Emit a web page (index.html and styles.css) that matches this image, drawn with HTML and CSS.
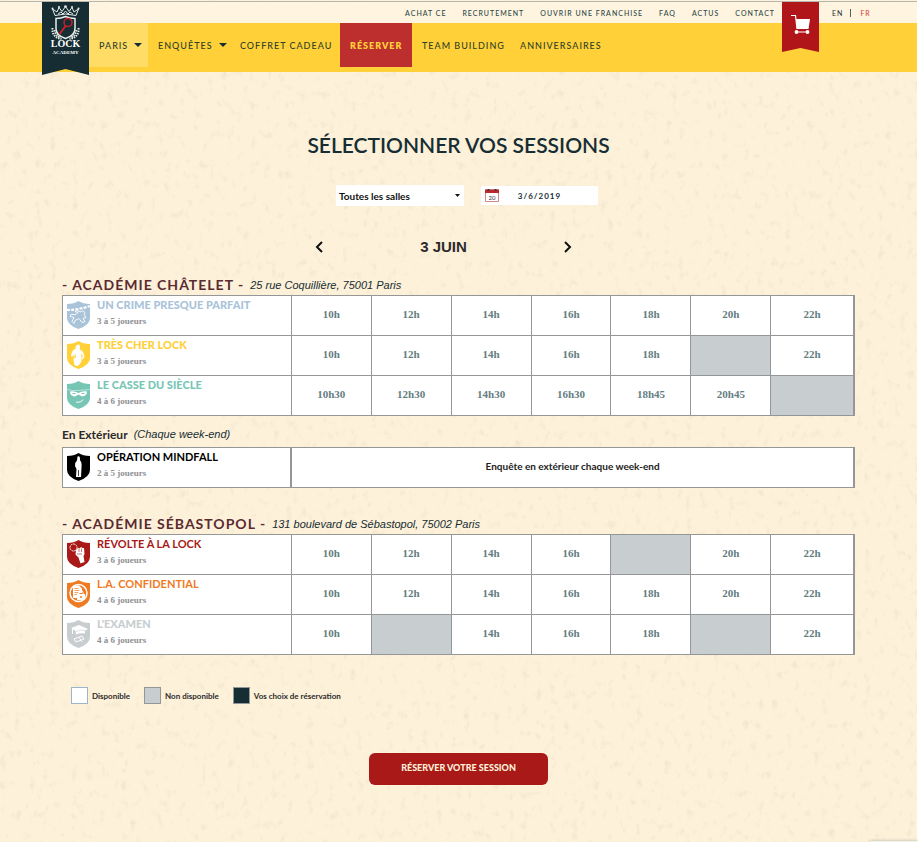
FILE: index.html
```html
<!DOCTYPE html>
<html lang="fr">
<head>
<meta charset="utf-8">
<title>Lock Academy – Réserver</title>
<meta name="viewport" content="width=device-width, initial-scale=1">
<link rel="stylesheet" href="styles.css">
</head>
<body>
<svg class="paper" aria-hidden="true">
  <filter id="grain" x="0" y="0" width="100%" height="100%">
    <feTurbulence type="fractalNoise" baseFrequency="0.14 0.1" numOctaves="4" seed="8"/>
    <feColorMatrix values="0 0 0 0 0.6  0 0 0 0 0.5  0 0 0 0 0.35  1.6 0 0 0 -0.93"/>
  </filter>
  <rect width="100%" height="100%" filter="url(#grain)"/>
</svg>
<header class="header">
  <a class="logo" href="#" aria-label="Lock Academy">
    <svg width="47" height="73" viewBox="0 0 47 73">
      <path d="M0 0h47v73L23.500 67 0 73z" fill="#152d33"/>
      <g fill="none" stroke="#e9eeec" stroke-width="1">
        <path d="M13 13.500 10.500 7l4.500 3 2-4.500 3 4L23.500 4.500 27 9.500l3-4L32 10l4.500-3L34 13.500q-10.500-3-21 0z"/>
        <path d="M14 16.500q5 0 9.500-2 4.500 2 9.500 2v10q0 7-9.500 10-9.500-3-9.500-10z" stroke-width="1.500"/>
        <path d="M16 12l3-2 2 2 2.500-3 2.500 3 2-2 3 2"/>
      </g>
      <g fill="none" stroke="#e9eeec" stroke-width="2" stroke-dasharray="1.500 1">
        <path d="M10.500 26q-1 9 9 11M36.500 26q1 9-9 11"/>
        <path d="M12.500 28q1 5 6 8M34.500 28q-1 5-6 8"/>
      </g>
      <g fill="#e9eeec"><circle cx="10.500" cy="6.500" r="1"/><circle cx="17" cy="5" r="1"/><circle cx="23.500" cy="4.500" r="1.300"/><circle cx="30" cy="5" r="1"/><circle cx="36.500" cy="6.500" r="1"/></g>
      <circle cx="26" cy="20.500" r="4" fill="none" stroke="#c8202a" stroke-width="1.500"/>
      <path d="M23.500 24 18 31.500" stroke="#c8202a" stroke-width="2" stroke-linecap="round"/>
      <text class="logo-big" x="23.500" y="45" text-anchor="middle">LOCK</text>
      <text class="logo-small" x="23.500" y="52" text-anchor="middle">ACADEMY</text>
    </svg>
  </a>
  <nav class="top-links" aria-label="Liens">
    <a href="#">ACHAT CE</a><a href="#">RECRUTEMENT</a><a href="#">OUVRIR UNE FRANCHISE</a><a href="#">FAQ</a><a href="#">ACTUS</a><a href="#">CONTACT</a>
  </nav>
  <nav class="menu" aria-label="Menu principal">
    <a class="city" href="#">PARIS <i class="caret"></i></a>
    <a href="#">ENQUÊTES <i class="caret"></i></a>
    <a href="#">COFFRET CADEAU</a>
    <a class="current" href="#">RÉSERVER</a>
    <a href="#">TEAM BUILDING</a>
    <a href="#">ANNIVERSAIRES</a>
  </nav>
  <a class="cart" href="#" aria-label="Panier">
    <svg width="37" height="50" viewBox="0 0 37 50">
      <path d="M0 0h37v50L18.500 46 0 50z" fill="#b0151a"/>
      <g fill="none" stroke="#fff" stroke-width="1.200"><path d="M9 13.500h4.500l1.500 13.500M14 30h12"/></g>
      <path d="M14 17h14l-1.500 10H15z" fill="#fff"/>
      <circle cx="14.500" cy="30" r="1.900" fill="#fff"/><circle cx="25.500" cy="30" r="1.900" fill="#fff"/>
    </svg>
  </a>
  <nav class="langs" aria-label="Langue"><a href="#">EN</a><a class="active" href="#">FR</a></nav>
</header>

<main class="page">
  <h1>SÉLECTIONNER VOS SESSIONS</h1>
  <form class="filters">
    <div class="room">
      <select aria-label="Salle"><option>Toutes les salles</option></select>
      <svg width="5" height="3" viewBox="0 0 5 3"><path d="M0 0h5L2.500 3z" fill="#111"/></svg>
    </div>
    <div class="date">
      <svg width="14" height="13" viewBox="0 0 14 13">
        <path d="M.5 1h13v11.500H.5z" fill="#fff" stroke="#cf8a8a"/><path d="M0 .5h14V4H0z" fill="#b8282c"/>
        <path d="M2.500 0h2v1.500h-2zM9.500 0h2v1.500h-2z" fill="#333"/>
        <text class="cal-day" x="7" y="10.500" text-anchor="middle">20</text>
      </svg>
      <input type="text" value="3/6/2019" aria-label="Date">
    </div>
  </form>
  <div class="day">
    <button type="button" aria-label="Jour précédent"><svg width="8" height="12" viewBox="0 0 8 12"><path d="M7 1 2 6l5 5"/></svg></button>
    <strong>3 JUIN</strong>
    <button type="button" aria-label="Jour suivant"><svg width="8" height="12" viewBox="0 0 8 12"><path d="m1 1 5 5-5 5"/></svg></button>
  </div>

  <section class="venue">
    <div class="venue-head"><h2>- ACADÉMIE CHÂTELET -</h2><em>25 rue Coquillière, 75001 Paris</em></div>
    <table>
      <colgroup><col class="col-game"><col class="col-slot" span="6"><col></colgroup>
      <tr>
        <th class="blue"><div class="game">
          <svg width="23" height="28" viewBox="0 0 23 28"><path d="M0 3Q7 3 11.500 0 16 3 23 3v14q0 7-11.500 11Q0 24 0 17z" fill="currentColor"/><path d="M0 9q11 0 23-4" fill="none" stroke="#fff" stroke-width="2.200" stroke-dasharray="3 1.200"/><path d="M14 11a2 2 0 1 1 3 2.500l2 3-3 1 2 3-3 1-3-4-4 2-1 3-2-2 2-4-4-1 1-2 5 0 2-2-3-1 2-1z" fill="none" stroke="#fff" stroke-width=".9"/></svg>
          <div><b class="heavy">UN CRIME PRESQUE PARFAIT</b><small>3 à 5 joueurs</small></div></div></th>
        <td><button>10h</button></td><td><button>12h</button></td><td><button>14h</button></td><td><button>16h</button></td><td><button>18h</button></td><td><button>20h</button></td><td><button>22h</button></td>
      </tr>
      <tr>
        <th class="yellow"><div class="game">
          <svg width="23" height="28" viewBox="0 0 23 28"><path d="M0 3Q7 3 11.500 0 16 3 23 3v14q0 7-11.500 11Q0 24 0 17z" fill="currentColor"/><path d="M10 4q3-1.500 3 2l-.5 2.500q4 .5 5 7.500l-2.500 3-1-4 .5 5q-2 5-5 5l-2-1-1-5 .5-5-2 2-1-1q1-7 5-7.500l-.5-2z" fill="#fff"/><path d="M8 12l1 4-2 2zM15 12l-1 3 2 2z" fill="currentColor"/></svg>
          <div><b class="heavy">TRÈS CHER LOCK</b><small>3 à 5 joueurs</small></div></div></th>
        <td><button>10h</button></td><td><button>12h</button></td><td><button>14h</button></td><td><button>16h</button></td><td><button>18h</button></td><td class="off"></td><td><button>22h</button></td>
      </tr>
      <tr>
        <th class="green"><div class="game">
          <svg width="23" height="28" viewBox="0 0 23 28"><path d="M0 3Q7 3 11.500 0 16 3 23 3v14q0 7-11.500 11Q0 24 0 17z" fill="currentColor"/><path d="M0 8.500q6 1.500 11.500 1T23 8.500" fill="none" stroke="#fff" stroke-width=".8" opacity=".6"/><path d="M3 10.500q4-1 8.500 1.500Q16 9.500 20 10.500q0 4.500-5 5l-3.500-2-3.500 2q-5-.5-5-5z" fill="#fff"/><path d="M5.500 12.500h3M14.500 12.500h3" stroke="currentColor" stroke-width="1.200"/><path d="M9 21q5 1 7-2.500" fill="none" stroke="#fff"/></svg>
          <div><b class="heavy">LE CASSE DU SIÈCLE</b><small>4 à 6 joueurs</small></div></div></th>
        <td><button>10h30</button></td><td><button>12h30</button></td><td><button>14h30</button></td><td><button>16h30</button></td><td><button>18h45</button></td><td><button>20h45</button></td><td class="off"></td>
      </tr>
    </table>
  </section>

  <section class="venue outdoor">
    <div class="venue-head"><h3>En Extérieur</h3><em>(Chaque week-end)</em></div>
    <table>
      <colgroup><col class="col-game"><col></colgroup>
      <tr>
        <th class="black"><div class="game">
          <svg width="23" height="28" viewBox="0 0 23 28"><path d="M0 3Q7 3 11.500 0 16 3 23 3v14q0 7-11.500 11Q0 24 0 17z" fill="currentColor"/><path d="M10.500 3.500q2.500-1 2.500 2v2q2 1 1.500 7l-.5 9.500h-5l.5-8-1.500-3q0-4 2-5.500z" fill="#fff"/><path d="M11.500 17v6" stroke="currentColor" stroke-width=".7"/></svg>
          <div><b>OPÉRATION MINDFALL</b><small>2 à 5 joueurs</small></div></div></th>
        <td class="note">Enquête en extérieur chaque week-end</td>
      </tr>
    </table>
  </section>

  <section class="venue second">
    <div class="venue-head"><h2>- ACADÉMIE SÉBASTOPOL -</h2><em>131 boulevard de Sébastopol, 75002 Paris</em></div>
    <table>
      <colgroup><col class="col-game"><col class="col-slot" span="6"><col></colgroup>
      <tr>
        <th class="red"><div class="game">
          <svg width="23" height="28" viewBox="0 0 23 28"><path d="M0 3Q7 3 11.500 0 16 3 23 3v14q0 7-11.500 11Q0 24 0 17z" fill="currentColor"/><circle cx="6.500" cy="7.500" r="3.500" fill="none" stroke="#fff" stroke-dasharray="2 .6"/><path d="M9 10l2-2 1.500.5L14 7l1.500 1 1.500 0 .5 6-1 2 1 6-4 1.500-2-6-3-3z" fill="#fff"/><path d="M12 9v3M14.500 8.500v3.500M10 14h5" stroke="currentColor" stroke-width=".6"/></svg>
          <div><b>RÉVOLTE À LA LOCK</b><small>3 à 6 joueurs</small></div></div></th>
        <td><button>10h</button></td><td><button>12h</button></td><td><button>14h</button></td><td><button>16h</button></td><td class="off"></td><td><button>20h</button></td><td><button>22h</button></td>
      </tr>
      <tr>
        <th class="orange"><div class="game">
          <svg width="23" height="28" viewBox="0 0 23 28"><path d="M0 3Q7 3 11.500 0 16 3 23 3v14q0 7-11.500 11Q0 24 0 17z" fill="currentColor"/><circle cx="11.500" cy="13" r="8.500" fill="none" stroke="#fff" stroke-width="1.500"/><path d="M6 5.500h6l3 3V13h-3v5H6z" fill="#fff"/><path d="M7.500 8.500h4M7.500 10.500h5M7.500 12.500h4M7.500 14.500h3" stroke="currentColor" stroke-width=".7"/><path d="M10 14h8v6h-8z" fill="#fff"/><path d="M12 14v-1.500q0-2 2-2t2 2V14" fill="none" stroke="#fff"/><circle cx="14" cy="17" r="1" fill="currentColor"/></svg>
          <div><b>L.A. CONFIDENTIAL</b><small>4 à 6 joueurs</small></div></div></th>
        <td><button>10h</button></td><td><button>12h</button></td><td><button>14h</button></td><td><button>16h</button></td><td><button>18h</button></td><td><button>20h</button></td><td><button>22h</button></td>
      </tr>
      <tr>
        <th class="grey"><div class="game">
          <svg width="23" height="28" viewBox="0 0 23 28"><path d="M0 3Q7 3 11.500 0 16 3 23 3v14q0 7-11.500 11Q0 24 0 17z" fill="currentColor"/><path d="M4 8l8-3 9 4-3 1.500v3q-5-1-9 1l-.5-3.500z" fill="#fff"/><path d="M5.500 9v5M7 19l8-3 2 3-8 3zM12 17l3 5" fill="none" stroke="#fff"/><path d="M9 11.500q4-2 9-1" fill="none" stroke="currentColor" stroke-width=".6"/></svg>
          <div><b class="heavy">L'EXAMEN</b><small>4 à 6 joueurs</small></div></div></th>
        <td><button>10h</button></td><td class="off"></td><td><button>14h</button></td><td><button>16h</button></td><td><button>18h</button></td><td class="off"></td><td><button>22h</button></td>
      </tr>
    </table>
  </section>

  <ul class="legend">
    <li><i class="free"></i>Disponible</li>
    <li><i class="taken"></i>Non disponible</li>
    <li><i class="chosen"></i>Vos choix de réservation</li>
  </ul>
  <button class="book" type="button">RÉSERVER VOTRE SESSION</button>
</main>
<div class="badge"></div>
</body>
</html>
```
FILE: styles.css
```css
* { box-sizing: border-box; }
body {
  position: relative;
  margin: 0;
  min-height: 100vh;
  border-right: 1px solid #fff;
  background: #fdf1da;
  color: #152d33;
  font-family: Lato, "Liberation Sans", sans-serif;
}
.paper { position: absolute; inset: 0; z-index: -1; width: 100%; height: 100%; opacity: .4; }
a { color: inherit; text-decoration: none; }
button { padding: 0; border: 0; background: none; color: inherit; font: inherit; cursor: pointer; }

.header {
  display: grid;
  grid-template-columns: 47px 1fr 37px 98px;
  grid-template-rows: 21px 49px;
  padding-left: 42px;
  margin-top: 1px;
  border-top: 1px solid #b4b6b2;
  background: linear-gradient(#fef4df 21px, #ffd037 21px);
}
.logo, .cart { grid-row: 1 / 3; height: 70px; }
.logo svg, .cart svg { display: block; overflow: visible; }
.logo-big { font: bold 10px "Liberation Serif", serif; fill: #fff; }
.logo-small { font: bold 5px "Liberation Serif", serif; fill: #fff; }
.cart { grid-column: 3; }
.top-links {
  grid-column: 2;
  display: flex;
  justify-content: flex-end;
  align-items: center;
  gap: 16px;
  padding-right: 7px;
  font-size: 7px;
  font-weight: 500;
  letter-spacing: 1px;
  color: #2d474a;
  white-space: nowrap;
}
.menu {
  grid-column: 2;
  grid-row: 2;
  display: grid;
  grid-template-columns: 59px 82px 110px 72px 98px 101px;
  height: 44px;
  font-size: 9px;
  font-weight: 500;
  letter-spacing: 1px;
  color: #2f4228;
  white-space: nowrap;
}
.menu a { display: flex; align-items: center; gap: 6px; padding-left: 10px; }
.menu .city { background: #ffdc66; }
.menu .current { background: #bd2e2e; color: #ffd037; font-weight: 800; }
.caret { border: 4px solid transparent; border-top-color: #152d33; border-bottom: 0; }
.langs {
  grid-column: 4;
  grid-row: 1;
  display: flex;
  align-items: center;
  padding-left: 13px;
  font-size: 7px;
  letter-spacing: 1px;
}
.langs .active { margin-left: 7px; padding-left: 9px; border-left: 1px solid #55605c; color: #d8383c; }

.page { padding: 60px 62px 56px; }
h1 { margin: 0; font-size: 21px; line-height: 26px; font-weight: 600; text-align: center; }
.filters { display: flex; justify-content: center; align-items: center; gap: 17px; margin-top: 27px; padding-left: 17px; }
.room, .date { display: flex; align-items: center; background: #fff; }
.room { width: 128px; height: 21px; padding-right: 4px; }
.room select {
  flex: 1;
  min-width: 0;
  padding: 0 3px;
  border: 0;
  appearance: none;
  background: none;
  color: #111;
  font: bold 10px Lato, sans-serif;
}
.date { width: 117px; height: 19px; padding-left: 4px; }
.date input {
  width: 81px;
  padding: 0;
  border: 0;
  background: none;
  color: #152d33;
  font: bold 8px Lato, sans-serif;
  letter-spacing: 1px;
  text-align: center;
}
.cal-day { font: 6px Lato, sans-serif; fill: #333; }
.day { display: flex; justify-content: center; align-items: center; gap: 97px; margin-top: 31px; padding-right: 30px; }
.day strong { font: bold 15px/20px "Liberation Sans", sans-serif; color: #2b2b2b; }
.day button { height: 12px; }
.day svg { display: block; fill: none; stroke: #111; stroke-width: 2; }

.venue { margin-top: 19px; }
.venue-head { display: flex; align-items: center; gap: 6px; height: 19px; padding-bottom: 1px; white-space: nowrap; }
h2 { margin: 0; font-size: 14px; line-height: 18px; font-weight: bold; letter-spacing: 1px; color: #5b2a31; }
h3 { margin: 0; font-size: 12px; font-weight: bold; color: #2b2b2b; }
.venue-head em { font: italic 11px "Liberation Sans", sans-serif; }
table { width: 100%; table-layout: fixed; border-collapse: collapse; border-right: 2px solid #949698; background: #fff; }
.col-game { width: 28.9%; }
.col-slot { width: 10.1%; }
tr { height: 40px; }
th, td { height: 40px; padding: 0; border: 1px solid #949698; }
th { text-align: left; vertical-align: top; }
td { text-align: center; font: bold 11px "Liberation Serif", serif; color: #647d80; }
td button { display: block; width: 100%; height: 39px; padding-bottom: 3px; }
.off { background: #c8cdcf; }
.game { display: flex; gap: 7px; padding: 2px 0 0 4px; }
.game svg { display: block; margin-top: 3px; }
.game b { display: block; font-size: 11px; line-height: 14px; font-weight: bold; white-space: nowrap; }
.game b.heavy { font-weight: 900; }
.game small { display: block; margin-top: 2px; font: bold 9px/14px "Liberation Serif", serif; color: #8e9092; }
.blue { color: #a9c3d9; }
.yellow { color: #ffd037; }
.green { color: #77c6b5; }
.black { color: #000; }
.red { color: #a81917; }
.orange { color: #ee7a22; }
.grey { color: #c8cdcf; }
.outdoor { margin-top: 9px; }
.outdoor .venue-head { margin-bottom: 3px; }
td.note { padding-bottom: 3px; border-left-width: 2px; color: #222; font: bold 10px Lato, sans-serif; }
.second { margin-top: 27px; }

.legend { display: flex; gap: 14px; margin: 32px 0 0; padding: 0 0 0 9px; list-style: none; font-size: 8px; font-weight: bold; color: #2b2b2b; }
.legend li { display: flex; align-items: center; gap: 4px; }
.legend i { width: 17px; height: 17px; border: 1px solid #949698; }
.legend .free { background: #fff; border-color: #9bb5cc; }
.legend .taken { background: #c8cdcf; }
.legend .chosen { background: #152d33; }
.book {
  display: block;
  width: 179px;
  height: 32px;
  margin: 49px auto 0;
  padding-bottom: 3px;
  border-radius: 6px;
  background: #a81917;
  color: #fdf1da;
  font-size: 9px;
  font-weight: 900;
}
.badge { position: fixed; right: 0; bottom: 0; width: 48px; height: 1px; background: #f5f3ee; box-shadow: 0 0 3px #777; }
```
